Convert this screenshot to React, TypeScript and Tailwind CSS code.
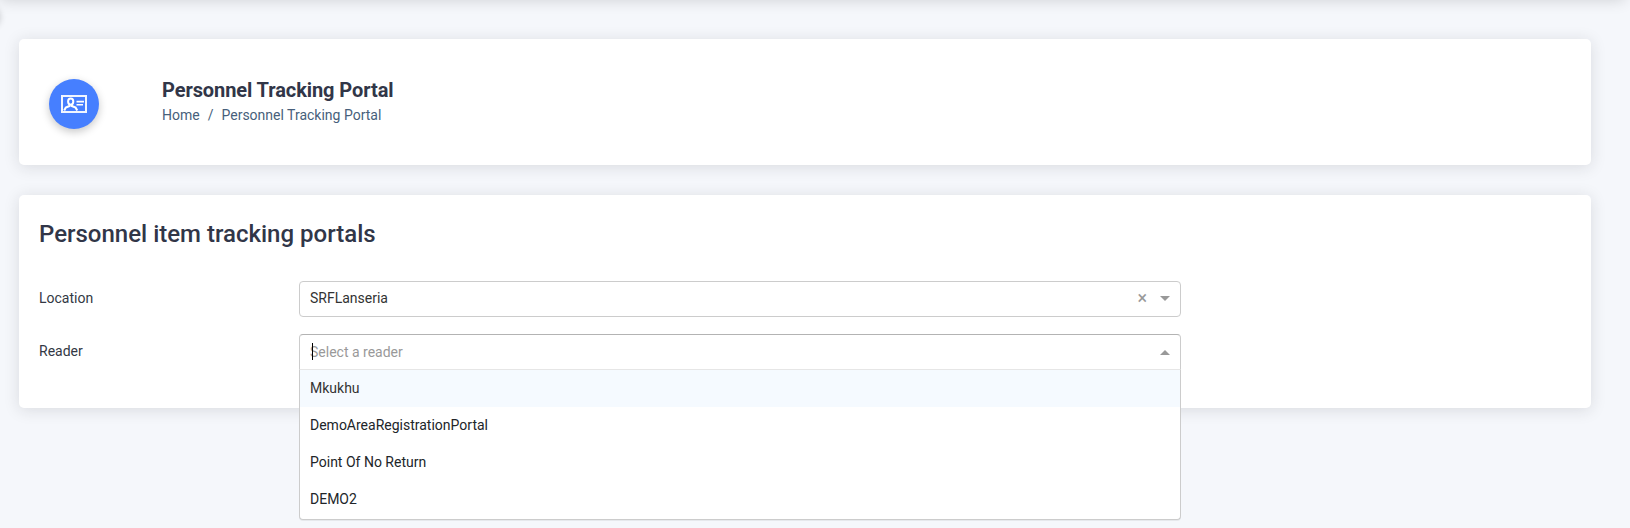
const options = ["Mkukhu", "DemoAreaRegistrationPortal", "Point Of No Return", "DEMO2"];

function IdCardIcon() {
  return (
    <svg width="26" height="18" viewBox="0 0 26 18" fill="none" stroke="#fff">
      <rect x="1" y="1" width="24" height="16" strokeWidth="2" strokeOpacity="0.92" />
      <ellipse cx="9.7" cy="6.6" rx="2.6" ry="3.1" strokeWidth="2" />
      <path d="M8.5 9.2v1.8L4.8 12.6 3.2 15.6M10.9 9.2v1.8l3.7 1.6 1.6 3" strokeWidth="2.1" />
      <path d="M15.5 6.6h7.5M15.5 9.8h6.5" strokeWidth="1.6" />
    </svg>
  );
}

function PageHeader() {
  return (
    <section className="flex h-[126px] rounded-[5px] bg-white pl-[30px] pt-10 shadow-[0_2px_16px_rgba(30,30,40,0.13)]">
      <div className="flex h-[50px] w-[50px] items-center justify-center rounded-full bg-[#467fff] shadow-[0_3px_8px_rgba(0,0,0,0.22)]">
        <IdCardIcon />
      </div>
      <div className="ml-[63px]">
        <h1 className="-mt-px mb-px text-[20px] font-bold leading-6 tracking-[-0.08px] text-[#313648]">Personnel Tracking Portal</h1>
        <nav className="flex text-[14px] leading-[25px] text-[#475f7b]">
          <span>Home</span>
          <span className="mx-2">/</span>
          <span>Personnel Tracking Portal</span>
        </nav>
      </div>
    </section>
  );
}

function LocationSelect() {
  return (
    <div className="flex h-9 w-[882px] items-center rounded border border-[#ccc] bg-white pb-px pl-[10px] pr-[10px] text-[#333]">
      <span className="grow">SRFLanseria</span>
      <span className="mr-[13px] pb-px text-[18px] leading-none text-[#999]">×</span>
      <svg width="10" height="5" viewBox="0 0 10 5">
        <path d="M0 0h10L5 5z" fill="#999" />
      </svg>
    </div>
  );
}

function ReaderSelect() {
  return (
    <div className="relative w-[882px]">
      <div className="flex h-9 items-center rounded-t border border-[#ccc] border-b-[#e6e6e6] border-t-[#b3b3b3] bg-white px-[10px] text-[#999]">
        <span className="relative grow">
          Select a reader
          <span className="absolute left-[2px] top-[1px] h-[17px] w-px bg-black" />
        </span>
        <svg width="10" height="5" viewBox="0 0 10 5">
          <path d="M0 5h10L5 0z" fill="#999" />
        </svg>
      </div>
      <ul className="absolute left-0 top-9 w-full overflow-hidden rounded-b border border-t-0 border-[#ccc] bg-white text-[#212529] shadow-[0_1px_0_rgba(0,0,0,0.06)]">
        {options.map((option, i) => (
          <li
            key={option}
            className={i === 0 ? "h-[37px] bg-[#f5faff] pl-[10px] leading-[37px] text-[#333]" : "h-[37px] pl-[10px] leading-[37px]"}
          >
            {option}
          </li>
        ))}
        <li className="h-px" />
      </ul>
    </div>
  );
}

export default function App() {
  return (
    <div className="relative h-[528px] overflow-hidden bg-[#f5f7fb] pl-[19px] pr-[39px] pt-[39px] font-['Roboto',sans-serif] text-[14px]">
      <div className="absolute -top-5 left-0 h-5 w-[1625px] shadow-[0_0_15px_rgba(0,0,0,0.16)]" />
      <div className="absolute -left-5 top-[7px] h-5 w-5 rounded-full shadow-[0_0_7px_rgba(0,0,0,0.2)]" />
      <PageHeader />
      <section className="mt-[30px] h-[213px] rounded-[5px] bg-white pl-5 pt-6 shadow-[0_2px_16px_rgba(30,30,40,0.13)]">
        <h2 className="h-[62px] text-[24px] font-medium leading-[30px] text-[#313648]">Personnel item tracking portals</h2>
        <div className="flex text-[#333844]">
          <label className="w-[260px] leading-[35px]">Location</label>
          <LocationSelect />
        </div>
        <div className="mt-[17px] flex text-[#333844]">
          <label className="w-[260px] leading-[35px]">Reader</label>
          <ReaderSelect />
        </div>
      </section>
    </div>
  );
}
